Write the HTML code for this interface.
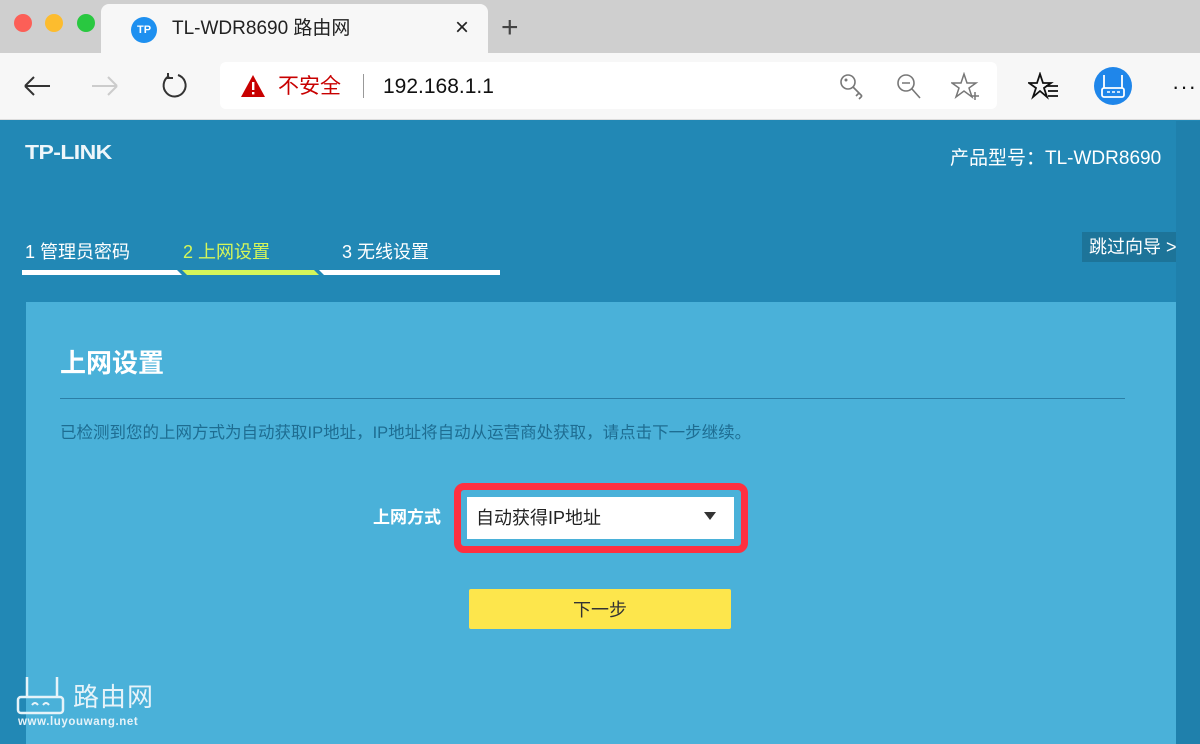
<!DOCTYPE html>
<html><head><meta charset="utf-8"><style>
*{margin:0;padding:0;box-sizing:border-box}
body{width:1200px;height:744px;overflow:hidden;position:relative;font-family:"Liberation Sans","Noto Sans CJK SC",sans-serif;background:#2288b5}
.abs{position:absolute;line-height:1.2}
</style></head><body>
<div class="abs" style="left:0;top:0;width:1200px;height:53px;background:#cfcfcf"></div>
<div class="abs" style="left:14px;top:14px;width:18px;height:18px;border-radius:50%;background:#fc5f57"></div>
<div class="abs" style="left:45px;top:14px;width:18px;height:18px;border-radius:50%;background:#fdbc2e"></div>
<div class="abs" style="left:77px;top:14px;width:18px;height:18px;border-radius:50%;background:#29c840"></div>
<div class="abs" style="left:101px;top:4px;width:387px;height:50px;background:#f7f7f7;border-radius:8px 8px 0 0"></div>
<div class="abs" style="left:131px;top:17px;width:26px;height:26px;border-radius:50%;background:#1e90f0;color:#fff;font-size:11px;font-weight:bold;text-align:center;line-height:26px">TP</div>
<div class="abs" style="left:172px;top:18px;font-size:19px;color:#222">TL-WDR8690 路由网</div>
<div class="abs" style="left:455px;top:14px;font-size:24px;color:#222">×</div>
<div class="abs" style="left:501px;top:10px;font-size:30px;color:#444;font-weight:300">+</div>
<div class="abs" style="left:0;top:53px;width:1200px;height:67px;background:#f7f7f7;border-bottom:1px solid #ddd"></div>
<svg class="abs" style="left:20px;top:72px" width="34" height="28"><path d="M5 14H30M5 14L14 5M5 14L14 23" stroke="#333" stroke-width="2" fill="none"/></svg>
<svg class="abs" style="left:88px;top:72px" width="34" height="28"><path d="M4 14H29M29 14L20 5M29 14L20 23" stroke="#ccc" stroke-width="2" fill="none"/></svg>
<svg class="abs" style="left:158px;top:70px" width="34" height="34"><path d="M11 6A11 11 0 1 0 20 5" stroke="#333" stroke-width="2" fill="none"/><path d="M10 3V8H15" stroke="#333" stroke-width="2" fill="none"/></svg>
<div class="abs" style="left:220px;top:62px;width:777px;height:47px;background:#fff;border-radius:6px"></div>
<svg class="abs" style="left:240px;top:74px" width="26" height="24"><path d="M13 1L25 23H1Z" fill="#c80000"/><rect x="12" y="8" width="2.4" height="8" fill="#fff"/><rect x="12" y="18" width="2.4" height="2.4" fill="#fff"/></svg>
<div class="abs" style="left:278px;top:74px;font-size:21px;color:#c80000">不安全</div>
<div class="abs" style="left:363px;top:74px;width:1px;height:24px;background:#999"></div>
<div class="abs" style="left:383px;top:74px;font-size:21px;color:#111">192.168.1.1</div>
<svg class="abs" style="left:838px;top:72px" width="30" height="30"><circle cx="10" cy="10" r="7" stroke="#777" stroke-width="1.6" fill="none"/><circle cx="8" cy="8" r="1.5" fill="#777"/><path d="M15 15L24 24M21 21L18 24M24 24L21 27" stroke="#777" stroke-width="1.6" fill="none"/></svg>
<svg class="abs" style="left:895px;top:72px" width="30" height="30"><circle cx="11" cy="11" r="8" stroke="#777" stroke-width="1.6" fill="none"/><path d="M7 11H15M17 17L25 26" stroke="#777" stroke-width="1.6"/></svg>
<svg class="abs" style="left:951px;top:72px" width="32" height="30"><path d="M13 2L16 11H25L18 16L21 25L13 19L5 25L8 16L1 11H10Z" stroke="#777" stroke-width="1.5" fill="none"/><path d="M24 20V28M20 24H28" stroke="#777" stroke-width="1.5"/></svg>
<svg class="abs" style="left:1028px;top:72px" width="34" height="30"><path d="M12 2L15 11H23L16 16L19 25L12 19L5 25L8 16L1 11H9Z" stroke="#111" stroke-width="1.8" fill="none"/><path d="M18 14H30M20 19H30M20 24H30" stroke="#111" stroke-width="1.8"/></svg>
<div class="abs" style="left:1094px;top:67px;width:38px;height:38px;border-radius:50%;background:#1f86ea"></div>
<svg class="abs" style="left:1094px;top:67px" width="38" height="38"><path d="M10 8V21M28 8V21" stroke="#fff" stroke-width="1.8"/><rect x="8" y="21" width="22" height="9" rx="2" stroke="#fff" stroke-width="1.8" fill="none"/><path d="M13 25H16M18 25H21M23 25H26" stroke="#fff" stroke-width="1.5"/></svg>
<div class="abs" style="left:1172px;top:74px;font-size:22px;color:#111;letter-spacing:1px">···</div>

<div class="abs" style="left:1176px;top:121px;width:24px;height:623px;background:#1f80ac"></div>
<div class="abs" style="left:25px;top:141px;font-size:20px;font-weight:bold;color:#eef6fa;transform:scaleX(1.15);transform-origin:left;letter-spacing:-0.5px">TP-LINK</div>
<div class="abs" style="left:950px;top:148px;font-size:19px;color:#fff">产品型号：TL-WDR8690</div>
<div class="abs" style="left:1082px;top:232px;width:94px;height:30px;background:#1d7499"></div>
<div class="abs" style="left:1089px;top:237px;font-size:18px;color:#fff;white-space:nowrap;width:87px;overflow:hidden">跳过向导 &gt;</div>
<div class="abs" style="left:25px;top:242px;font-size:18px;color:#fff">1 管理员密码</div>
<div class="abs" style="left:183px;top:242px;font-size:18px;color:#d4f65a">2 上网设置</div>
<div class="abs" style="left:342px;top:242px;font-size:18px;color:#fff">3 无线设置</div>
<svg class="abs" style="left:20px;top:269px" width="485" height="10"><path d="M2 1H157L162 6H2Z" fill="#fff"/><path d="M162 1H294L299 6H167Z" fill="#d4f65a"/><path d="M299 1H480V6H304Z" fill="#fff"/></svg>

<div class="abs" style="left:26px;top:302px;width:1150px;height:442px;background:#4ab1d9"></div>
<div class="abs" style="left:60px;top:348px;font-size:26px;font-weight:bold;color:#fff">上网设置</div>
<div class="abs" style="left:60px;top:398px;width:1065px;height:1px;background:#2b7ea6"></div>
<div class="abs" style="left:60px;top:424px;font-size:16.5px;color:#1e6d92">已检测到您的上网方式为自动获取IP地址，IP地址将自动从运营商处获取，请点击下一步继续。</div>
<div class="abs" style="left:373px;top:508px;font-size:17px;font-weight:bold;color:#fff">上网方式</div>
<div class="abs" style="left:454px;top:483px;width:294px;height:70px;border:7px solid #fe3040;border-radius:10px"></div>
<div class="abs" style="left:467px;top:497px;width:267px;height:42px;background:#fff"></div>
<div class="abs" style="left:476px;top:508px;font-size:18px;color:#222">自动获得IP地址</div>
<div class="abs" style="left:704px;top:512px;width:0;height:0;border-left:6px solid transparent;border-right:6px solid transparent;border-top:8px solid #333"></div>
<div class="abs" style="left:469px;top:589px;width:262px;height:40px;background:#fde64c;border-radius:2px;text-align:center;line-height:42px;font-size:18px;color:#333">下一步</div>

<svg class="abs" style="left:15px;top:675px" width="50" height="45"><path d="M12 2V22M42 2V22" stroke="#e6f3f9" stroke-width="2.5"/><rect x="3" y="22" width="45" height="16" rx="3" stroke="#e6f3f9" stroke-width="2.5" fill="none"/><path d="M17 30Q20 26 23 30M28 30Q31 26 34 30" stroke="#e6f3f9" stroke-width="2" fill="none"/></svg>
<div class="abs" style="left:73px;top:684px;font-size:26px;color:#e6f3f9;letter-spacing:1px;line-height:1">路由网</div>
<div class="abs" style="left:18px;top:717px;font-size:11.5px;font-weight:bold;color:#e6f3f9;letter-spacing:0.6px;line-height:1">www.luyouwang.net</div>
</body></html>
